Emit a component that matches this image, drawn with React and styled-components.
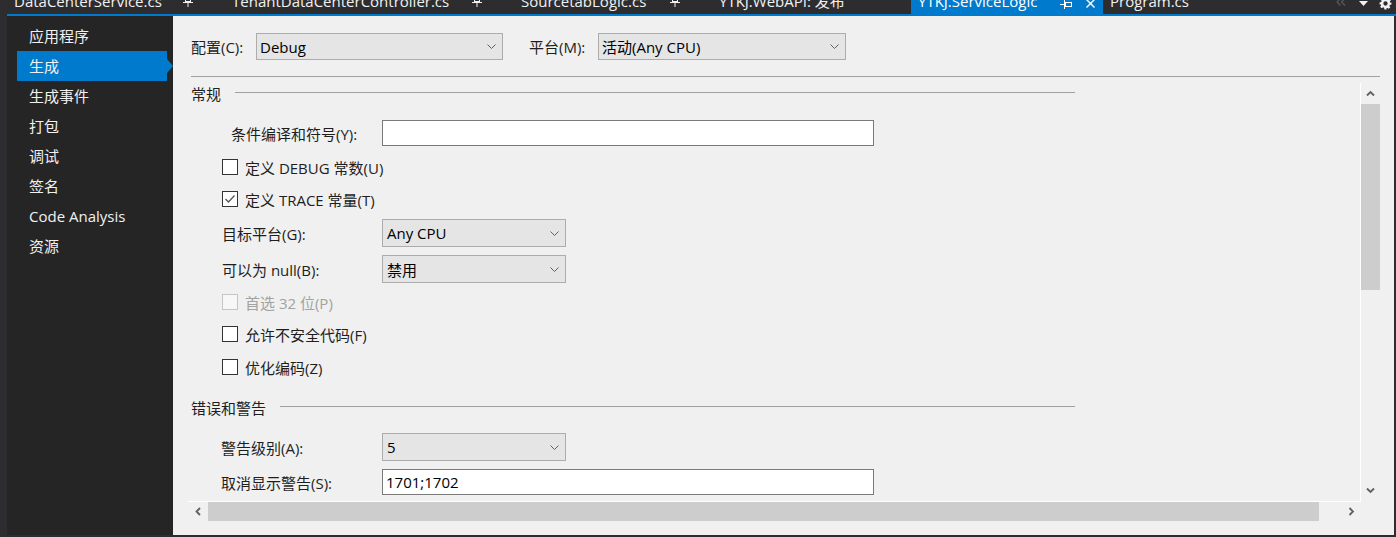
import React from 'react';
import styled, { createGlobalStyle } from 'styled-components';

const FONT = `"Open Sans", "Noto Sans CJK SC", sans-serif`;

const Global = createGlobalStyle`
  html, body { margin: 0; padding: 0; background: #2d2d30; }
  body { font-family: ${FONT}; }
  *, *::before, *::after { box-sizing: border-box; }
`;

const Window = styled.div`
  width: 1396px;
  height: 537px;
  background: #2d2d30;
  display: flex;
  flex-direction: column;
  padding: 0 0 2px 7px;
  overflow: hidden;
  font-family: ${FONT};
  font-size: 15px;
`;

const TabStrip = styled.div`
  display: flex;
  height: 14px;
  overflow: hidden;
  color: #f1f1f1;
`;

const Tab = styled.div`
  flex: none;
  width: ${(p) => p.$w}px;
  height: 14px;
  display: flex;
  align-items: flex-start;
  padding: 0 6px 0 7px;
  background: ${(p) => (p.$active ? '#007acc' : 'transparent')};
  color: ${(p) => (p.$active ? '#ffffff' : '#f1f1f1')};
`;

const TabTitle = styled.span`
  flex: 1;
  white-space: nowrap;
  line-height: 14px;
  margin-top: -6px;
`;

const TabIcon = styled.span`
  flex: none;
  width: 14px;
  height: 14px;
  display: flex;
  justify-content: center;
  align-items: flex-start;
  margin-left: ${(p) => p.$gap || 0}px;
  visibility: ${(p) => (p.$hidden ? 'hidden' : 'visible')};
`;

const TabTools = styled.div`
  margin-left: auto;
  display: flex;
  align-items: flex-start;
`;

const ToolSlot = styled.span`
  width: 22px;
  height: 14px;
  display: flex;
  justify-content: center;
  align-items: flex-start;
`;

const BlueRule = styled.div`
  height: 2px;
  background: #007acc;
`;

const Body = styled.div`
  flex: 1;
  display: flex;
  margin-right: 2px;
  min-height: 0;
`;

const Nav = styled.nav`
  flex: none;
  width: 166px;
  background: #252526;
  padding-top: 5px;
  color: #f1f1f1;
`;

const NavItem = styled.div`
  position: relative;
  width: 150px;
  height: 30px;
  margin-left: 10px;
  padding-left: 12px;
  line-height: 30px;
  white-space: nowrap;
  background: ${(p) => (p.$selected ? '#007acc' : 'transparent')};
  &::after {
    content: '';
    display: ${(p) => (p.$selected ? 'block' : 'none')};
    position: absolute;
    left: 100%;
    top: 8px;
    border-left: 6px solid #007acc;
    border-top: 7px solid transparent;
    border-bottom: 7px solid transparent;
  }
`;

const Content = styled.main`
  flex: 1;
  background: #f0f0f0;
  color: #1e1e1e;
  display: flex;
  flex-direction: column;
  padding: 17px 14px 14px 15px;
  min-width: 0;
`;

const TopBar = styled.div`
  display: flex;
  align-items: center;
  height: 27px;
  margin-left: 3px;
`;

const TopLabel = styled.span`
  flex: none;
  width: ${(p) => p.$w}px;
  margin-left: ${(p) => p.$ml || 0}px;
  white-space: nowrap;
`;

const Select = styled.div`
  flex: none;
  width: ${(p) => p.$w}px;
  height: ${(p) => p.$h || 28}px;
  background: #e5e5e5;
  border: 1px solid #acacac;
  display: flex;
  align-items: center;
  padding: 0 6px 0 ${(p) => p.$pl || 4}px;
  white-space: nowrap;
  color: #000;
`;

const ChevronWrap = styled.span`
  margin-left: auto;
  display: flex;
`;

const Separator = styled.div`
  height: 1px;
  margin: 16px 0 0 3px;
  background: #a0a0a0;
`;

const ScrollFrame = styled.div`
  flex: 1;
  margin-top: 6px;
  display: grid;
  grid-template-columns: 1fr 19px;
  grid-template-rows: 1fr 19px;
  min-height: 0;
`;

const Viewport = styled.div`
  overflow: hidden;
  border-right: 1px solid #ffffff;
  border-bottom: 1px solid #ffffff;
  padding-left: 3px;
`;

const VScroll = styled.div`
  display: flex;
  flex-direction: column;
`;

const HScroll = styled.div`
  display: flex;
  align-items: stretch;
`;

const ArrowBox = styled.div`
  flex: none;
  width: ${(p) => p.$w || 19}px;
  height: ${(p) => p.$h || 19}px;
  display: flex;
  align-items: center;
  justify-content: center;
  margin-left: ${(p) => (p.$end ? 'auto' : '0')};
  margin-top: ${(p) => (p.$endV ? 'auto' : '0')};
  margin-bottom: ${(p) => p.$mb || 0}px;
`;

const Thumb = styled.div`
  flex: none;
  background: #cdcdcd;
  width: ${(p) => (p.$w ? `${p.$w}px` : '100%')};
  height: ${(p) => (p.$h ? `${p.$h}px` : '100%')};
  margin-top: ${(p) => p.$mt || 0}px;
`;

const SectionHeader = styled.div`
  width: 884px;
  height: 20px;
  display: flex;
  align-items: center;
  margin-top: ${(p) => p.$mt || 0}px;
  white-space: nowrap;
`;

const SectionLine = styled.div`
  flex: 1;
  height: 1px;
  margin: 0 0 2px 14px;
  background: #a0a0a0;
`;

const FieldRow = styled.div`
  display: grid;
  grid-template-columns: 191px auto;
  align-items: center;
  height: 28px;
  margin-top: ${(p) => p.$mt || 0}px;
`;

const FieldLabel = styled.span`
  padding-left: ${(p) => p.$indent}px;
  white-space: nowrap;
`;

const TextBox = styled.div`
  width: 492px;
  height: 26px;
  background: #ffffff;
  border: 1px solid #7a7a7a;
  padding-left: 3px;
  line-height: 24px;
  color: #000;
`;

const CheckRow = styled.label`
  display: flex;
  align-items: center;
  gap: 7px;
  height: 32px;
  padding-left: 31px;
  margin-top: ${(p) => p.$mt || 0}px;
  color: ${(p) => (p.$disabled ? '#a2a2a2' : '#1e1e1e')};
  white-space: nowrap;
`;

const Box = styled.span`
  flex: none;
  width: 16px;
  height: 16px;
  background: ${(p) => (p.$disabled ? '#f7f7f7' : '#ffffff')};
  border: 1px solid ${(p) => (p.$disabled ? '#c5c5c5' : '#333333')};
  display: flex;
  align-items: center;
  justify-content: center;
`;

const Chevron = () => (
  <svg width="9" height="5" viewBox="0 0 9 5">
    <polyline points="0.5,0.5 4.5,4.5 8.5,0.5" fill="none" stroke="#606060" strokeWidth="1" />
  </svg>
);

const Arrow = ({ dir }) => {
  const pts = {
    up: '1,5.5 4.5,2 8,5.5',
    down: '1,1.5 4.5,5 8,1.5',
    left: '5,1 1.5,4.5 5,8',
    right: '1.5,1 5,4.5 1.5,8',
  }[dir];
  const vertical = dir === 'up' || dir === 'down';
  return (
    <svg width={vertical ? 9 : 7} height={vertical ? 7 : 9} viewBox={vertical ? '0 0 9 7' : '0 0 7 9'}>
      <polyline points={pts} fill="none" stroke="#606060" strokeWidth="1.8" />
    </svg>
  );
};

const PinVertical = () => (
  <svg width="10" height="14" viewBox="0 0 10 14" style={{ marginTop: -5 }}>
    <rect x="2.5" y="0.5" width="5" height="6" fill="none" stroke="#f1f1f1" />
    <line x1="0" y1="7.5" x2="10" y2="7.5" stroke="#f1f1f1" />
    <line x1="5" y1="7.5" x2="5" y2="12" stroke="#f1f1f1" />
  </svg>
);

const PinHorizontal = () => (
  <svg width="14" height="10" viewBox="0 0 14 10" style={{ marginTop: -1 }}>
    <line x1="1" y1="5.5" x2="5" y2="5.5" stroke="#ffffff" />
    <line x1="5.5" y1="1" x2="5.5" y2="10" stroke="#ffffff" />
    <rect x="6.5" y="3.5" width="6" height="4" fill="none" stroke="#ffffff" />
  </svg>
);

const CloseX = () => (
  <svg width="9" height="9" viewBox="0 0 9 9" style={{ marginTop: -1 }}>
    <line x1="0.5" y1="0.5" x2="8.5" y2="8.5" stroke="#ffffff" strokeWidth="1.4" />
    <line x1="8.5" y1="0.5" x2="0.5" y2="8.5" stroke="#ffffff" strokeWidth="1.4" />
  </svg>
);

const Gear = () => (
  <svg width="13" height="13" viewBox="0 0 24 24" style={{ marginTop: -3 }}>
    <path
      fill="#f1f1f1"
      d="M10 1h4l.6 3.1 1.9.8 2.6-1.8 2.8 2.8-1.8 2.6.8 1.9L23 10v4l-3.1.6-.8 1.9 1.8 2.6-2.8 2.8-2.6-1.8-1.9.8L14 23h-4l-.6-3.1-1.9-.8-2.6 1.8-2.8-2.8 1.8-2.6-.8-1.9L1 14v-4l3.1-.6.8-1.9-1.8-2.6 2.8-2.8 2.6 1.8 1.9-.8z M12 8a4 4 0 1 0 0 8a4 4 0 1 0 0-8z"
      fillRule="evenodd"
    />
  </svg>
);

const DropTri = () => (
  <svg width="9" height="5" viewBox="0 0 9 5" style={{ marginTop: 1 }}>
    <polygon points="0,0 9,0 4.5,5" fill="#f1f1f1" />
  </svg>
);

const Chevrons = () => (
  <svg width="10" height="8" viewBox="0 0 10 8" style={{ marginTop: -2 }}>
    <polyline points="4.5,0.5 1,4 4.5,7.5" fill="none" stroke="#5a5a5e" strokeWidth="1.2" />
    <polyline points="9,0.5 5.5,4 9,7.5" fill="none" stroke="#5a5a5e" strokeWidth="1.2" />
  </svg>
);

const Check = () => (
  <svg width="12" height="10" viewBox="0 0 12 10">
    <polyline points="1.5,5 4.5,8 10.5,1.5" fill="none" stroke="#555555" strokeWidth="1.3" />
  </svg>
);

const tabs = [
  { title: 'DataCenterService.cs', w: 218 },
  { title: 'TenantDataCenterController.cs', w: 289 },
  { title: 'SourcetabLogic.cs', w: 198 },
  { title: 'YTKJ.WebAPI: 发布', w: 199, noPin: true },
  { title: 'YTKJ.ServiceLogic', w: 192, active: true },
  { title: 'Program.cs', w: 120, noPin: true },
];

const navItems = ['应用程序', '生成', '生成事件', '打包', '调试', '签名', 'Code Analysis', '资源'];

const CheckItem = ({ label, checked, disabled, mt }) => (
  <CheckRow $mt={mt} $disabled={disabled}>
    <Box $disabled={disabled}>{checked && <Check />}</Box>
    <span>{label}</span>
  </CheckRow>
);

export default function App() {
  return (
    <>
      <Global />
      <Window>
        <TabStrip>
          {tabs.map((t) => (
            <Tab key={t.title} $w={t.w} $active={t.active}>
              <TabTitle>{t.title}</TabTitle>
              {!t.noPin && (
                <TabIcon>{t.active ? <PinHorizontal /> : <PinVertical />}</TabIcon>
              )}
              {!t.noPin && (
                <TabIcon $gap={10} $hidden={!t.active}>
                  <CloseX />
                </TabIcon>
              )}
            </Tab>
          ))}
          <TabTools>
            <ToolSlot>
              <Chevrons />
            </ToolSlot>
            <ToolSlot>
              <DropTri />
            </ToolSlot>
            <ToolSlot>
              <Gear />
            </ToolSlot>
          </TabTools>
        </TabStrip>
        <BlueRule />
        <Body>
          <Nav>
            {navItems.map((n) => (
              <NavItem key={n} $selected={n === '生成'}>
                {n}
              </NavItem>
            ))}
          </Nav>
          <Content>
            <TopBar>
              <TopLabel $w={65}>配置(C):</TopLabel>
              <Select $w={247} $h={27} $pl={3}>
                Debug
                <ChevronWrap>
                  <Chevron />
                </ChevronWrap>
              </Select>
              <TopLabel $w={69} $ml={26}>
                平台(M):
              </TopLabel>
              <Select $w={248} $h={27} $pl={3}>
                活动(Any CPU)
                <ChevronWrap>
                  <Chevron />
                </ChevronWrap>
              </Select>
            </TopBar>
            <Separator />
            <ScrollFrame>
              <Viewport>
                <SectionHeader>
                  常规
                  <SectionLine />
                </SectionHeader>
                <FieldRow $mt={16}>
                  <FieldLabel $indent={40}>条件编译和符号(Y):</FieldLabel>
                  <TextBox />
                </FieldRow>
                <CheckItem mt={4} label="定义 DEBUG 常数(U)" />
                <CheckItem label="定义 TRACE 常量(T)" checked />
                <FieldRow $mt={4}>
                  <FieldLabel $indent={31}>目标平台(G):</FieldLabel>
                  <Select $w={184}>
                    Any CPU
                    <ChevronWrap>
                      <Chevron />
                    </ChevronWrap>
                  </Select>
                </FieldRow>
                <FieldRow $mt={8}>
                  <FieldLabel $indent={31}>可以为 null(B):</FieldLabel>
                  <Select $w={184}>
                    禁用
                    <ChevronWrap>
                      <Chevron />
                    </ChevronWrap>
                  </Select>
                </FieldRow>
                <CheckItem mt={3} label="首选 32 位(P)" disabled />
                <CheckItem label="允许不安全代码(F)" />
                <CheckItem mt={1} label="优化编码(Z)" />
                <SectionHeader $mt={14}>
                  错误和警告
                  <SectionLine />
                </SectionHeader>
                <FieldRow $mt={16}>
                  <FieldLabel $indent={30}>警告级别(A):</FieldLabel>
                  <Select $w={184}>
                    5
                    <ChevronWrap>
                      <Chevron />
                    </ChevronWrap>
                  </Select>
                </FieldRow>
                <FieldRow $mt={7}>
                  <FieldLabel $indent={30}>取消显示警告(S):</FieldLabel>
                  <TextBox>1701;1702</TextBox>
                </FieldRow>
              </Viewport>
              <VScroll>
                <ArrowBox $h={20}>
                  <Arrow dir="up" />
                </ArrowBox>
                <Thumb $h={186} $mt={1} />
                <ArrowBox $h={20} $endV $mb={2}>
                  <Arrow dir="down" />
                </ArrowBox>
              </VScroll>
              <HScroll>
                <ArrowBox $w={20}>
                  <Arrow dir="left" />
                </ArrowBox>
                <Thumb $w={1111} />
                <ArrowBox $w={20} $end>
                  <Arrow dir="right" />
                </ArrowBox>
              </HScroll>
              <div />
            </ScrollFrame>
          </Content>
        </Body>
      </Window>
    </>
  );
}
